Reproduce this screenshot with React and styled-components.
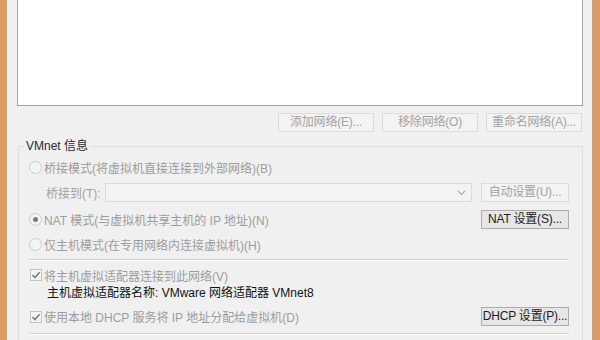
import React from "react";
import styled, { createGlobalStyle } from "styled-components";

const Global = createGlobalStyle`
  html, body { margin: 0; padding: 0; background: #f0f0f0; }
  body { font-family: "Liberation Sans", "Noto Sans CJK SC", sans-serif; font-size: 12px; }
`;

const Frame = styled.div`
  width: 600px;
  height: 340px;
  box-sizing: border-box;
  border-left: 6px solid #dd9a62;
  border-right: 7px solid #dd9a62;
  background: #f0f0f0;
  overflow: hidden;
  display: flex;
`;

const Body = styled.div`
  flex: 1;
  box-shadow: inset 1px 0 0 #c9a27f, inset -1px 0 0 #c9a27f;
  padding: 0 10px 0 11px;
  display: flex;
  flex-direction: column;
`;

const ListBox = styled.div`
  height: 106px;
  box-sizing: border-box;
  background: #fff;
  border: 1px solid #a3a3a3;
  border-top: none;
`;

const ButtonRow = styled.div`
  display: flex;
  justify-content: flex-end;
  gap: 8px;
  margin-top: 7px;
  padding-right: 1px;
`;

const Button = styled.button`
  width: ${(p) => p.$w || 96}px;
  height: 19px;
  box-sizing: border-box;
  padding: 0;
  font: inherit;
  font-size: 12px;
  line-height: 17px;
  letter-spacing: -0.2px;
  white-space: nowrap;
  overflow: visible;
  border: 1px solid ${(p) => (p.disabled ? "#dcdcdc" : "#adadad")};
  background: ${(p) => (p.disabled ? "#f3f3f3" : "#e6e6e6")};
  color: ${(p) => (p.disabled ? "#a3a3a3" : "#1e1e1e")};
  flex: none;
`;

const GroupBox = styled.div`
  position: relative;
  margin-top: 14px;
  margin-left: 1px;
  border: 1px solid #dcdcdc;
  border-bottom: none;
  padding: 10px 13px 0 10px;
  display: flex;
  flex-direction: column;
  flex: 1;
`;

const Legend = styled.span`
  position: absolute;
  left: 5px;
  top: -8px;
  padding: 0 2px;
  background: #f0f0f0;
  color: #2a2a2a;
  line-height: 14px;
`;

const Row = styled.div`
  display: flex;
  align-items: center;
  height: ${(p) => p.$h || 20}px;
  margin-top: ${(p) => p.$mt || 0}px;
  padding-left: ${(p) => p.$pl || 0}px;
`;

const Option = styled.div`
  display: flex;
  align-items: center;
  gap: 2px;
  flex: 1;
  color: #9d9d9d;
  white-space: nowrap;
`;

const RadioCircle = styled.span`
  width: 13px;
  height: 13px;
  box-sizing: border-box;
  border-radius: 50%;
  border: 1px solid #cdcdcd;
  background: #f4f4f4;
  display: flex;
  align-items: center;
  justify-content: center;
  flex: none;
  &::after {
    content: "";
    width: 5px;
    height: 5px;
    border-radius: 50%;
    background: ${(p) => (p.$on ? "#7a7a7a" : "transparent")};
  }
`;

const CheckBox = styled.span`
  width: 12px;
  height: 12px;
  margin-left: 1px;
  box-sizing: border-box;
  border: 1px solid #c3c3c3;
  background: #f4f4f4;
  display: flex;
  align-items: center;
  justify-content: center;
  flex: none;
`;

const FieldLabel = styled.span`
  width: 59px;
  flex: none;
  color: #a3a3a3;
`;

const Combo = styled.div`
  flex: 1;
  height: 19px;
  box-sizing: border-box;
  border: 1px solid #dadada;
  background: #f3f3f3;
  display: flex;
  align-items: center;
  justify-content: flex-end;
  padding-right: 5px;
  margin-right: 9px;
`;

const Separator = styled.div`
  height: 1px;
  background: #cfcfcf;
  margin-top: ${(p) => p.$mt || 0}px;
  box-shadow: 0 1px 0 #ffffff;
`;

const InfoText = styled.span`
  color: #111;
  white-space: nowrap;
`;

const Check = () => (
  <svg width="10" height="10" viewBox="0 0 10 10">
    <path d="M1.5 5.2 L4 7.6 L8.6 2.2" fill="none" stroke="#7d7d7d" strokeWidth="1.6" />
  </svg>
);

const Chevron = () => (
  <svg width="9" height="6" viewBox="0 0 9 6">
    <path d="M1 1 L4.5 4.5 L8 1" fill="none" stroke="#a8a8a8" strokeWidth="1.1" />
  </svg>
);

export default function App() {
  return (
    <>
      <Global />
      <Frame>
        <Body>
          <ListBox />
          <ButtonRow>
            <Button disabled>添加网络(E)...</Button>
            <Button disabled>移除网络(O)</Button>
            <Button disabled>重命名网络(A)...</Button>
          </ButtonRow>
          <GroupBox>
            <Legend>VMnet 信息</Legend>
            <Row>
              <Option>
                <RadioCircle />
                桥接模式(将虚拟机直接连接到外部网络)(B)
              </Option>
            </Row>
            <Row $h={19} $mt={6} $pl={17}>
              <FieldLabel>桥接到(T):</FieldLabel>
              <Combo>
                <Chevron />
              </Combo>
              <Button disabled $w={88}>自动设置(U)...</Button>
            </Row>
            <Row $h={19} $mt={8}>
              <Option>
                <RadioCircle $on />
                NAT 模式(与虚拟机共享主机的 IP 地址)(N)
              </Option>
              <Button $w={88}>NAT 设置(S)...</Button>
            </Row>
            <Row $mt={5}>
              <Option>
                <RadioCircle />
                仅主机模式(在专用网络内连接虚拟机)(H)
              </Option>
            </Row>
            <Separator $mt={5} />
            <Row $mt={5}>
              <Option>
                <CheckBox>
                  <Check />
                </CheckBox>
                将主机虚拟适配器连接到此网络(V)
              </Option>
            </Row>
            <Row $h={13} $pl={18}>
              <InfoText>主机虚拟适配器名称: VMware 网络适配器 VMnet8</InfoText>
            </Row>
            <Row $h={19} $mt={9}>
              <Option>
                <CheckBox>
                  <Check />
                </CheckBox>
                使用本地 DHCP 服务将 IP 地址分配给虚拟机(D)
              </Option>
              <Button $w={88}>DHCP 设置(P)...</Button>
            </Row>
            <Separator $mt={7} />
          </GroupBox>
        </Body>
      </Frame>
    </>
  );
}
